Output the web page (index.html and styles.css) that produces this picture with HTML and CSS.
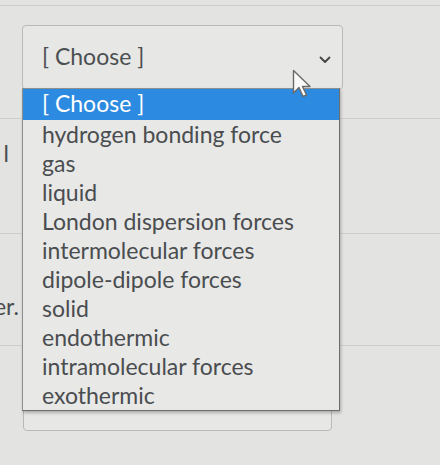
FILE: index.html
```html
<!DOCTYPE html>
<html>
<head>
<meta charset="utf-8">
<link rel="stylesheet" href="styles.css">
</head>
<body>
<div class="table">
  <div class="row row1">
    <div class="label"></div>
    <div class="cell">
      <div class="select-wrap">
        <div class="select">
          <span class="value">[ Choose ]</span>
          <svg class="chev" width="12" height="8" viewBox="0 0 12 8"><path d="M1.5 1.5 L6 6 L10.5 1.5" fill="none" stroke="#444" stroke-width="1.8" stroke-linecap="round" stroke-linejoin="round"/></svg>
        </div>
        <ul class="dropdown">
          <li class="opt selected">[ Choose ]</li>
          <li class="opt">hydrogen bonding force</li>
          <li class="opt">gas</li>
          <li class="opt">liquid</li>
          <li class="opt">London dispersion forces</li>
          <li class="opt">intermolecular forces</li>
          <li class="opt">dipole-dipole forces</li>
          <li class="opt">solid</li>
          <li class="opt">endothermic</li>
          <li class="opt">intramolecular forces</li>
          <li class="opt">exothermic</li>
        </ul>
        <svg class="cursor" width="20" height="30" viewBox="0 0 20 30"><path d="M1.5 1.5 L1.5 24 L7 18.5 L11 27.5 L14.5 26 L10.5 17.5 L18 17.5 Z" fill="#fafafa" stroke="#6a6a6a" stroke-width="1.4" stroke-linejoin="round"/></svg>
      </div>
    </div>
  </div>
  <div class="row row2">
    <div class="label"><span class="lbl lbl2">l</span></div>
    <div class="cell"></div>
  </div>
  <div class="row row3">
    <div class="label"><span class="lbl lbl3">er.</span></div>
    <div class="cell"></div>
  </div>
  <div class="row row4">
    <div class="label"></div>
    <div class="cell">
      <div class="select select2">
        <span class="value">[ Choose ]</span>
      </div>
    </div>
  </div>
</div>
</body>
</html>
```

FILE: styles.css
```css
html, body {
  margin: 0;
  padding: 0;
}
body {
  width: 440px;
  height: 465px;
  overflow: hidden;
  background: #e3e4e1;
  font-family: Lato, "Open Sans", sans-serif;
  color: #4a4d50;
}
.table {
  padding-top: 5px;
}
.row {
  display: grid;
  grid-template-columns: 22px 1fr;
  border-top: 1px solid #cdcecb;
  box-sizing: border-box;
}
.row1 { height: 113px; }
.row2 { height: 115px; }
.row3 { height: 112px; }
.row4 { height: 125px; }
.label {
  display: flex;
  justify-content: flex-end;
  overflow: hidden;
  font-size: 23px;
  line-height: 29px;
  color: #4a4d50;
}
.lbl {
  white-space: nowrap;
}
.lbl2 {
  padding-top: 20px;
  padding-right: 13px;
}
.lbl3 {
  padding-top: 58px;
  padding-right: 3px;
}
.cell {
  position: relative;
}
.select-wrap {
  position: relative;
  width: 321px;
  margin-top: 19px;
}
.select {
  box-sizing: border-box;
  height: 65px;
  border: 1px solid #b9bab7;
  border-radius: 4px;
  background: #e7e8e5;
  display: flex;
  align-items: center;
  justify-content: space-between;
  padding: 0 11px 0 19px;
}
.value {
  font-size: 23px;
  color: #4c4f52;
  padding-bottom: 4px;
}
.chev {
  margin-top: 4px;
}
.dropdown {
  position: absolute;
  left: 0;
  top: 63px;
  width: 318px;
  margin: 0;
  padding: 0;
  list-style: none;
  background: #e8e8e6;
  border: 1px solid #8e8f8d;
  border-right-color: #6d6e6c;
  border-bottom-color: #6d6e6c;
  box-shadow: 1px 2px 3px rgba(0,0,0,0.25);
  box-sizing: border-box;
  z-index: 2;
}
.opt {
  height: 29px;
  line-height: 29px;
  font-size: 23px;
  padding-left: 19px;
  color: #4a4d50;
  white-space: nowrap;
}
.opt.selected {
  background: #2c8ae0;
  color: #ffffff;
  height: 31px;
  line-height: 29px;
}
.cursor {
  position: absolute;
  left: 270px;
  top: 44px;
  z-index: 3;
}
.select2 {
  width: 309px;
  height: 55px;
  margin-top: 30px;
  margin-left: 1px;
  align-items: flex-start;
  padding-top: 6px;
}
```
